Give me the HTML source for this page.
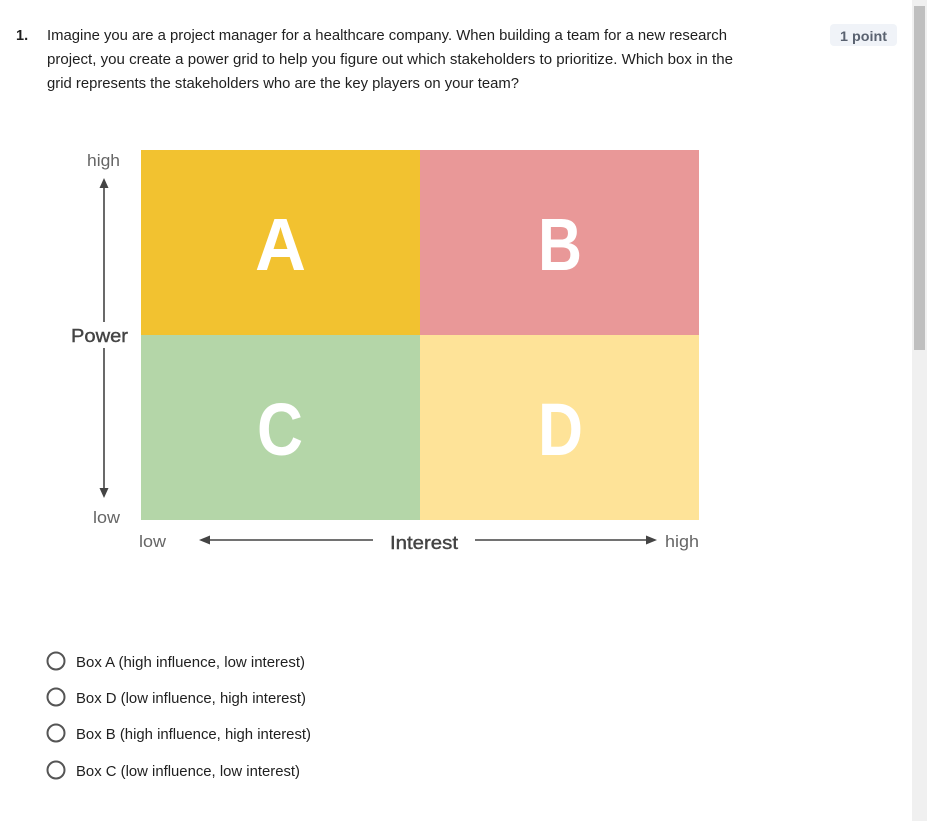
<!DOCTYPE html>
<html><head><meta charset="utf-8"><style>
html,body{margin:0;padding:0;background:#fff;width:927px;height:821px;overflow:hidden}
svg{display:block}
</style></head><body>
<svg width="927" height="821" viewBox="0 0 927 821" xmlns="http://www.w3.org/2000/svg">
<rect x="912" y="0" width="15" height="821" fill="#f0f0f0"/>
<rect x="914" y="6" width="11" height="344" fill="#bfbfbf"/>
<g font-family="Liberation Sans, sans-serif" fill="#1f1f1f" font-size="14.5">
<text x="16" y="40" font-weight="bold">1.</text>
<text x="47" y="40" textLength="680" lengthAdjust="spacingAndGlyphs">Imagine you are a project manager for a healthcare company. When building a team for a new research</text>
<text x="47" y="64" textLength="686" lengthAdjust="spacingAndGlyphs">project, you create a power grid to help you figure out which stakeholders to prioritize. Which box in the</text>
<text x="47" y="88" textLength="472" lengthAdjust="spacingAndGlyphs">grid represents the stakeholders who are the key players on your team?</text>
</g>
<rect x="830" y="24" width="67" height="22" rx="4" fill="#f0f3f8"/>
<text x="840" y="41" font-family="Liberation Sans, sans-serif" font-size="14" font-weight="bold" fill="#5a6270" textLength="47" lengthAdjust="spacingAndGlyphs">1 point</text>

<rect x="141" y="150" width="279" height="185" fill="#f2c230"/>
<rect x="420" y="150" width="279" height="185" fill="#e99898"/>
<rect x="141" y="335" width="279" height="185" fill="#b4d6a8"/>
<rect x="420" y="335" width="279" height="185" fill="#fee398"/>
<g font-family="Liberation Sans, sans-serif" font-weight="bold" font-size="74" fill="#fff">
<text x="255" y="270" textLength="51" lengthAdjust="spacingAndGlyphs">A</text>
<text x="538" y="270" textLength="44" lengthAdjust="spacingAndGlyphs">B</text>
<text x="257" y="455" textLength="46" lengthAdjust="spacingAndGlyphs">C</text>
<text x="538" y="455" textLength="45" lengthAdjust="spacingAndGlyphs">D</text>
</g>
<g stroke="#444" stroke-width="1.6">
<line x1="104" y1="186" x2="104" y2="322"/><line x1="104" y1="348" x2="104" y2="490"/>
<line x1="208" y1="540" x2="373" y2="540"/><line x1="475" y1="540" x2="648" y2="540"/>
</g>
<g fill="#444">
<path d="M104 178 L99.5 188 L108.5 188Z"/><path d="M104 498 L99.5 488 L108.5 488Z"/>
<path d="M199 540 L210 535.5 L210 544.5Z"/><path d="M657 540 L646 535.5 L646 544.5Z"/>
</g>
<g font-family="Liberation Sans, sans-serif" font-size="17" fill="#666">
<text x="87" y="166" textLength="33" lengthAdjust="spacingAndGlyphs">high</text>
<text x="93" y="523" textLength="27" lengthAdjust="spacingAndGlyphs">low</text>
<text x="139" y="547" textLength="27" lengthAdjust="spacingAndGlyphs">low</text>
<text x="665" y="547" textLength="34" lengthAdjust="spacingAndGlyphs">high</text>
</g>
<g font-family="Liberation Sans, sans-serif" font-size="18" fill="#444" stroke="#444" stroke-width="0.4">
<text x="71" y="342" textLength="57" lengthAdjust="spacingAndGlyphs">Power</text>
<text x="390" y="549" textLength="68" lengthAdjust="spacingAndGlyphs">Interest</text>
</g>

<g fill="none" stroke="#555" stroke-width="2">
<circle cx="56" cy="661" r="8.5"/><circle cx="56" cy="697" r="8.5"/>
<circle cx="56" cy="733" r="8.5"/><circle cx="56" cy="770" r="8.5"/>
</g>
<g font-family="Liberation Sans, sans-serif" font-size="14.5" fill="#1f1f1f">
<text x="76" y="667" textLength="229" lengthAdjust="spacingAndGlyphs">Box A (high influence, low interest)</text>
<text x="76" y="703" textLength="230" lengthAdjust="spacingAndGlyphs">Box D (low influence, high interest)</text>
<text x="76" y="739" textLength="235" lengthAdjust="spacingAndGlyphs">Box B (high influence, high interest)</text>
<text x="76" y="776" textLength="224" lengthAdjust="spacingAndGlyphs">Box C (low influence, low interest)</text>
</g>
</svg>
</body></html>
